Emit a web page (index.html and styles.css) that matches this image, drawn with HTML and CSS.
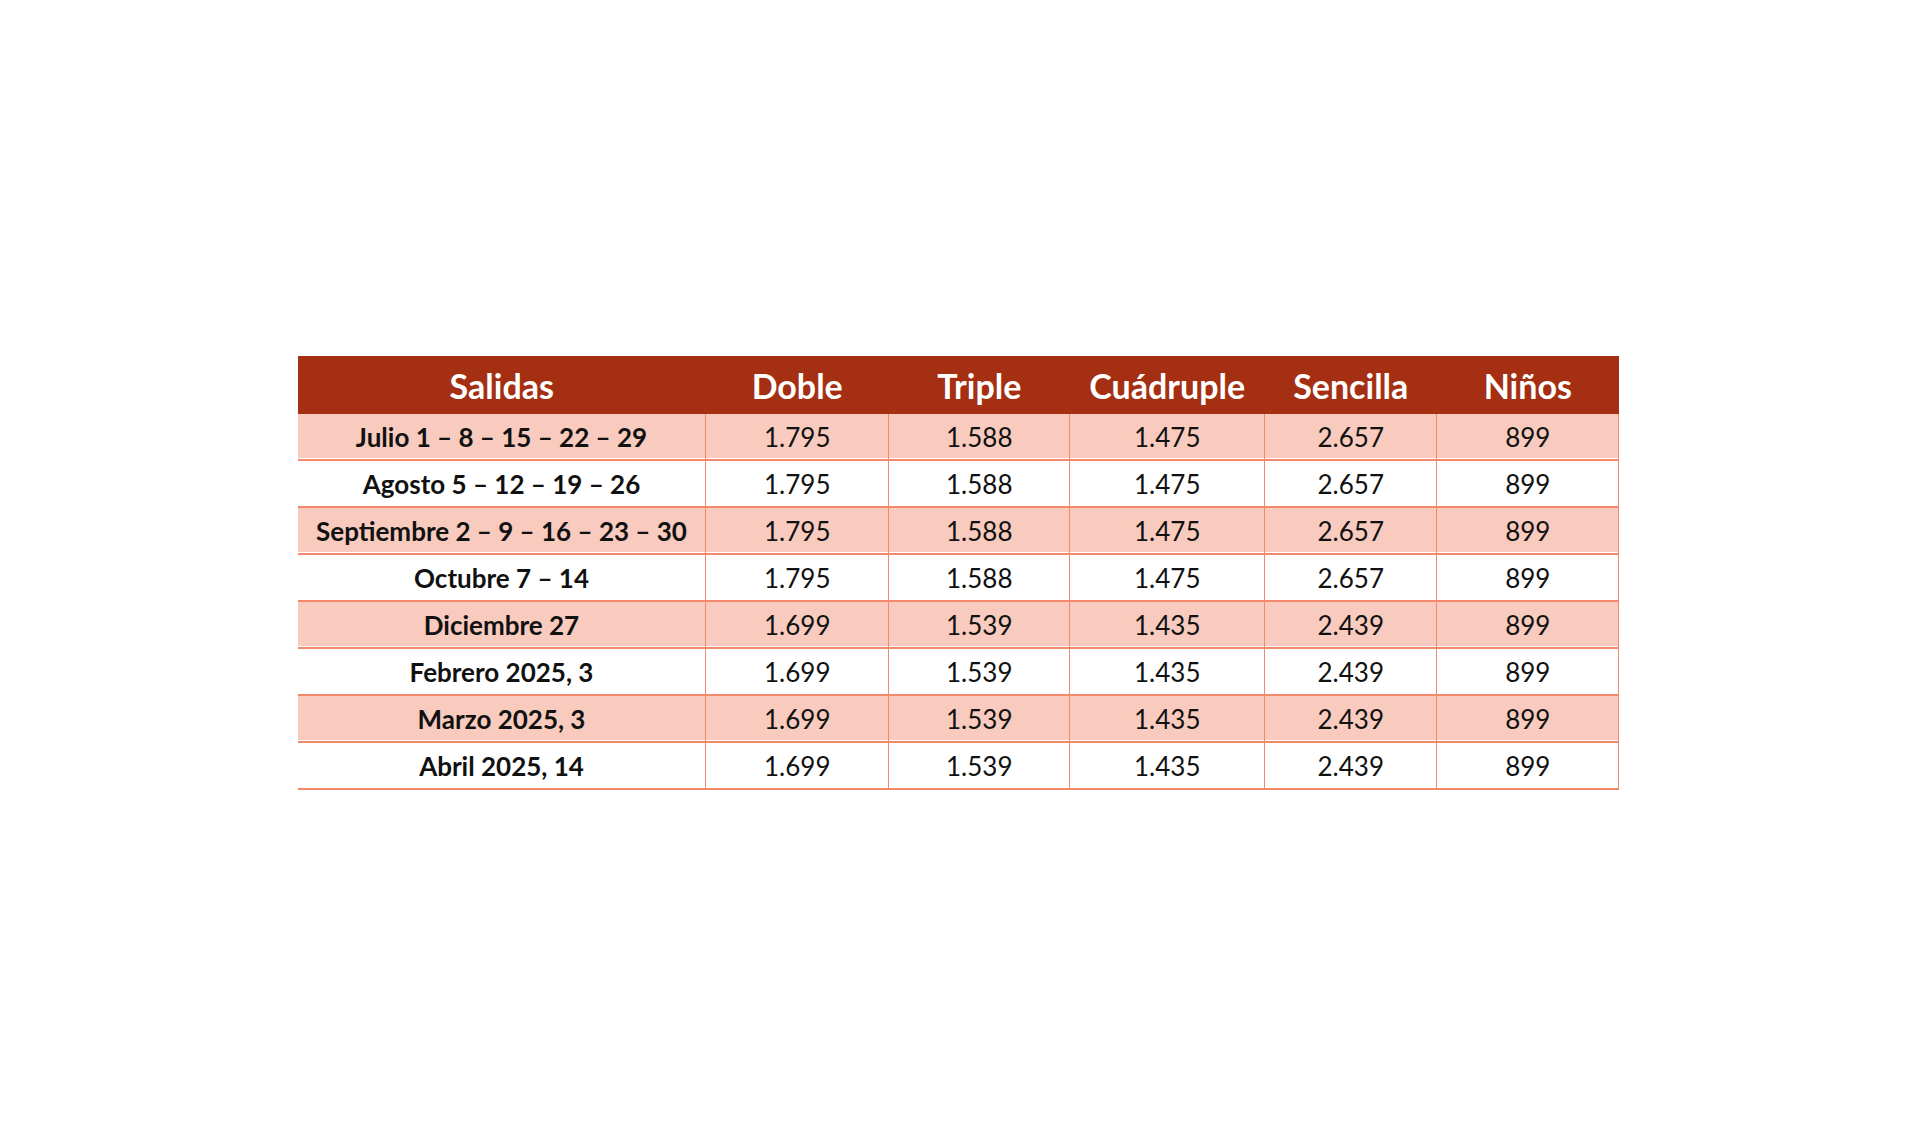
FILE: index.html
```html
<!DOCTYPE html>
<html lang="es">
<head>
<meta charset="utf-8">
<title>Salidas</title>
<link rel="stylesheet" href="styles.css">
</head>
<body>
<div class="page">
  <table class="prices">
    <colgroup>
      <col class="c-date"><col class="c-doble"><col class="c-triple"><col class="c-cuad"><col class="c-sen"><col class="c-nin">
    </colgroup>
    <thead>
      <tr><th>Salidas</th><th>Doble</th><th>Triple</th><th>Cuádruple</th><th>Sencilla</th><th>Niños</th></tr>
    </thead>
    <tbody>
      <tr class="odd"><td class="date">Julio 1 – 8 – 15 – 22 – 29</td><td>1.795</td><td>1.588</td><td>1.475</td><td>2.657</td><td>899</td></tr>
      <tr><td class="date">Agosto 5 – 12 – 19 – 26</td><td>1.795</td><td>1.588</td><td>1.475</td><td>2.657</td><td>899</td></tr>
      <tr class="odd"><td class="date">Septiembre 2 – 9 – 16 – 23 – 30</td><td>1.795</td><td>1.588</td><td>1.475</td><td>2.657</td><td>899</td></tr>
      <tr><td class="date">Octubre 7 – 14</td><td>1.795</td><td>1.588</td><td>1.475</td><td>2.657</td><td>899</td></tr>
      <tr class="odd"><td class="date">Diciembre 27</td><td>1.699</td><td>1.539</td><td>1.435</td><td>2.439</td><td>899</td></tr>
      <tr><td class="date">Febrero 2025, 3</td><td>1.699</td><td>1.539</td><td>1.435</td><td>2.439</td><td>899</td></tr>
      <tr class="odd"><td class="date">Marzo 2025, 3</td><td>1.699</td><td>1.539</td><td>1.435</td><td>2.439</td><td>899</td></tr>
      <tr><td class="date">Abril 2025, 14</td><td>1.699</td><td>1.539</td><td>1.435</td><td>2.439</td><td>899</td></tr>
    </tbody>
  </table>
</div>
</body>
</html>
```

FILE: styles.css
```css
html, body {
  margin: 0;
  padding: 0;
  background: #ffffff;
}

.page {
  display: flex;
  justify-content: center;
  padding-top: 356px;
  padding-right: 3px;
}

.prices {
  border-collapse: collapse;
  table-layout: fixed;
  width: 1321px;
  font-family: Lato, "Open Sans", sans-serif;
  color: #111111;
}

.c-date { width: 408px; }
.c-doble { width: 183px; }
.c-triple { width: 181px; }
.c-cuad { width: 195px; }
.c-sen { width: 172px; }
.c-nin { width: 182px; }

.prices th {
  background: #a52f12;
  color: #ffffff;
  font-weight: 700;
  font-size: 34px;
  height: 58px;
  padding: 0;
  text-align: center;
  vertical-align: middle;
}

.prices td {
  height: 45px;
  padding: 0;
  text-align: center;
  vertical-align: middle;
  font-size: 26px;
  font-weight: 400;
  border-bottom: 2px solid #f2896c;
  border-right: 1px solid #f2896c;
}

.prices td.date {
  font-weight: 700;
  font-size: 26px;
}

.prices tr.odd td {
  background: #f8cbbe;
  box-shadow: inset 0 -1px 0 #ffffff;
}
```
